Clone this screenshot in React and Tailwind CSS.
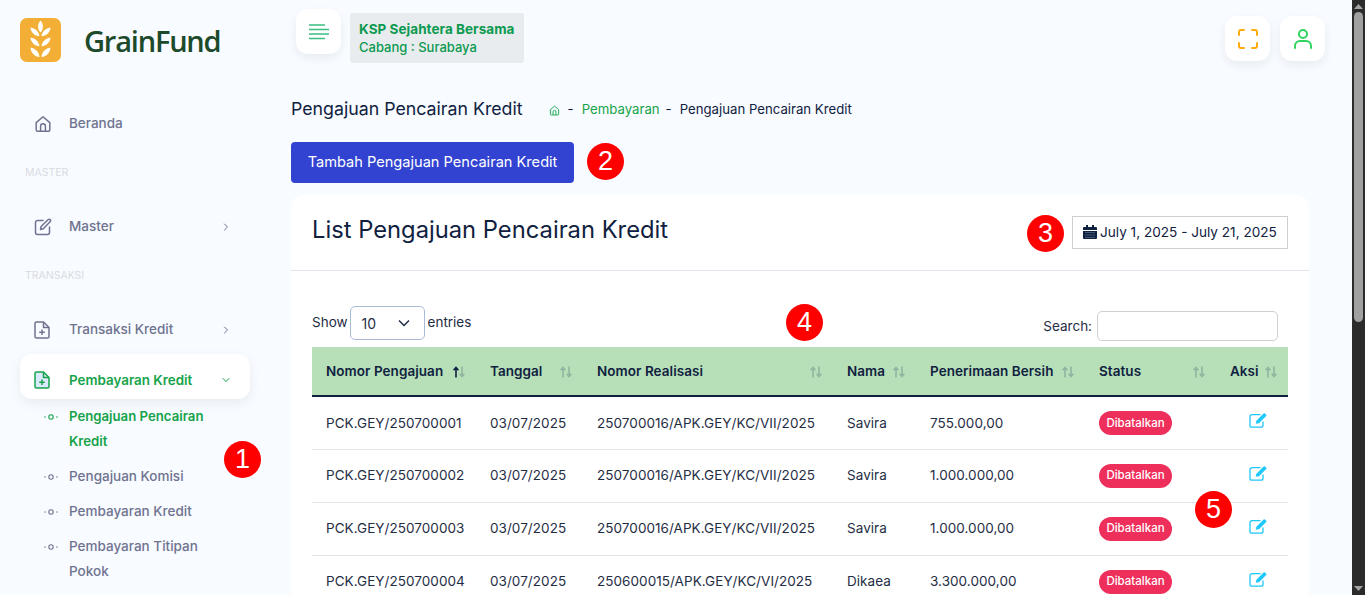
import React from "react";

function Sort({ active }) {
  return (
    <svg width="14" height="14" viewBox="0 0 14 14" className="mt-[2px] shrink-0">
      <g fill="none" strokeWidth="1.6" stroke={active ? "#10213f" : "#8fb5a0"}>
        <path d="M4 12.500V3M1.600 5.200 4 2.500l2.400 2.700" />
      </g>
      <g fill="none" strokeWidth="1.6" stroke="#8fb5a0">
        <path d="M10 1.500V11M7.600 8.800 10 11.500l2.400-2.700" />
      </g>
    </svg>
  );
}

function Edit() {
  return (
    <svg width="19" height="16" viewBox="0 0 19 16" fill="none">
      <path d="M11.500 2.600H3a2 2 0 0 0-2 2v8.600a2 2 0 0 0 2 2h9a2 2 0 0 0 2-2V9.500" stroke="#1ec8fa" strokeWidth="1.300" />
      <path d="M6.700 11.700l.7-3L14.600 1.500a1 1 0 0 1 1.400 0l1.200 1.200a1 1 0 0 1 0 1.400L10 11.200z" fill="#1ec8fa" />
    </svg>
  );
}

function Bullet({ active }) {
  const c = active ? "#16a34a" : "#6f7390";
  return (
    <svg width="14" height="6" viewBox="0 0 14 6" fill="none" className="shrink-0">
      <circle cx="7" cy="3" r="2.200" stroke={c} strokeWidth="1.100" />
      <path d="M0 3h2M12 3h2" stroke={c} strokeWidth="0.800" />
    </svg>
  );
}

function Home({ c = "#6f7390", s = 18 }) {
  return (
    <svg width={s} height={s} viewBox="0 0 18 18" fill="none" stroke={c} strokeWidth="1.500" strokeLinejoin="round">
      <path d="M2.200 7.600 9 1.800l6.800 5.800v7.200a1.500 1.500 0 0 1-1.500 1.500H3.700a1.500 1.500 0 0 1-1.500-1.500z" />
      <path d="M6.600 16.200v-5a2.400 2.400 0 0 1 4.800 0v5" />
    </svg>
  );
}

function FilePlus({ active }) {
  const c = active ? "#16a34a" : "#6f7390";
  return (
    <svg width="16" height="18" viewBox="0 0 16 18" fill="none" stroke={c} strokeWidth="1.500" strokeLinejoin="round">
      <path d="M2.500 1h7L15 6.500v9a1.500 1.500 0 0 1-1.500 1.500h-11A1.500 1.500 0 0 1 1 15.500v-13A1.500 1.500 0 0 1 2.500 1z" fill={active ? "#dbeafe" : "none"} />
      <path d="M9.500 1v5.500H15" />
      <path d="M8 8.500v5.500M5.200 11.200h5.600" />
    </svg>
  );
}

function EditNav() {
  return (
    <svg width="18" height="18" viewBox="0 0 18 18" fill="none" stroke="#6f7390" strokeWidth="1.500" strokeLinejoin="round" strokeLinecap="round">
      <path d="M9 2.500H3.500a2 2 0 0 0-2 2v10a2 2 0 0 0 2 2h10a2 2 0 0 0 2-2V9" />
      <path d="M6.500 11.500l.6-3L14 1.700a1.400 1.400 0 0 1 2.100 2L9.300 10.700z" />
    </svg>
  );
}

function Chev({ down, c = "#6f7390" }) {
  return (
    <svg width="8" height="8" viewBox="0 0 8 8" fill="none" stroke={c} strokeWidth="1" strokeLinecap="round" strokeLinejoin="round">
      {down ? <path d="M1 2.500l3 3 3-3" /> : <path d="M2.500 1l3 3-3 3" />}
    </svg>
  );
}

function NavItem({ icon, label, chev }) {
  return (
    <div className="flex h-[45px] items-center rounded-xl pl-[14px] pr-[20px]">
      <span className="flex w-[35px] shrink-0 items-center">{icon}</span>
      <span className="flex-1 text-[13.5px] font-medium text-[#6f7390]">{label}</span>
      {chev && <Chev />}
    </div>
  );
}

function SubItem({ active, children }) {
  return (
    <div className="mb-[10px] flex pl-[24px] pr-[20px]">
      <span className="flex h-[25px] w-[25px] shrink-0 items-center">
        <Bullet active={active} />
      </span>
      <span className={`leading-[25px] ${active ? "text-[13.2px] font-semibold text-[#16a34a]" : "text-[13.5px] font-medium text-[#6f7390]"}`}>{children}</span>
    </div>
  );
}

function Marker({ n, className }) {
  return (
    <span className={`absolute flex h-[37px] w-[37px] items-center justify-center rounded-full bg-[#fe0000] font-['Liberation_Sans',sans-serif] text-[27px] leading-none font-normal text-white ${className}`}>
      {n}
    </span>
  );
}

function Sidebar() {
  return (
    <aside className="relative w-[271px] shrink-0 bg-[#f8fbff]">
      <div className="flex h-[80px] items-center pl-[20px]">
        <svg width="41" height="44" viewBox="0 0 41 44" className="shrink-0">
          <rect width="41" height="44" rx="7" fill="#f2ae35" />
          <g fill="#fff">
            <path d="M20.500 2.500c3.200 3.600 3.200 8.500 0 12-3.200-3.500-3.200-8.400 0-12z" />
            <path d="M10.500 9.500c4.500.8 8.500 3.700 9 8.800-4.700-.2-8.900-4-9-8.800zM30.500 9.500c-4.500.8-8.500 3.700-9 8.800 4.700-.2 8.900-4 9-8.800z" />
            <path d="M10.500 19.500c4.500.8 8.500 3.700 9 8.800-4.700-.2-8.900-4-9-8.800zM30.500 19.500c-4.500.8-8.500 3.700-9 8.800 4.700-.2 8.900-4 9-8.800z" />
            <path d="M10.500 29.500c4.500.8 8.500 4 9 9.500-4.700-.2-8.900-4.500-9-9.500zM30.500 29.500c-4.500.8-8.500 4-9 9.500 4.700-.2 8.900-4.500 9-9.500z" />
          </g>
        </svg>
        <span className="ml-[23px] font-['Open_Sans',sans-serif] text-[29px] leading-none font-semibold tracking-[-1.2px] text-[#1c4a2b]">GrainFund</span>
      </div>
      <div className="pl-[20px] pr-[21px] pt-[21px]">
        <NavItem icon={<Home />} label="Beranda" />
        <div className="flex h-[58px] items-start pl-[5px] pt-[18px] text-[10.5px] leading-[17px] text-[#d9dce3]">MASTER</div>
        <NavItem icon={<EditNav />} label="Master" chev />
        <div className="flex h-[58px] items-start pl-[5px] pt-[18px] text-[10.5px] leading-[17px] text-[#d9dce3]">TRANSAKSI</div>
        <NavItem icon={<FilePlus />} label="Transaksi Kredit" chev />
        <div className="mt-[2px] flex h-[45px] items-center rounded-xl bg-white pl-[14px] pr-[20px] pt-[7px] shadow-[0_4px_12px_rgba(30,40,70,0.07)]">
          <span className="flex w-[35px] shrink-0 items-center"><FilePlus active /></span>
          <span className="flex-1 text-[13.4px] font-semibold text-[#16a34a]">Pembayaran Kredit</span>
          <Chev down c="#16a34a" />
        </div>
      </div>
      <div className="pl-[20px] pr-[21px] pt-[5px]">
        <SubItem active>Pengajuan Pencairan Kredit</SubItem>
        <SubItem>Pengajuan Komisi</SubItem>
        <SubItem>Pembayaran Kredit</SubItem>
        <SubItem>Pembayaran Titipan Pokok</SubItem>
      </div>
      <Marker n="1" className="left-[224px] top-[441px]" />
    </aside>
  );
}

function IconBtn({ children }) {
  return (
    <button className="flex h-[45px] w-[45px] items-center justify-center rounded-xl bg-white shadow-[0_4px_10px_rgba(30,40,70,0.07)]">
      {children}
    </button>
  );
}

function Header() {
  return (
    <div className="flex h-[80px] items-start pl-[5px] pt-[9px]">
      <IconBtn>
        <svg width="20" height="16" viewBox="0 0 20 16" stroke="#3bbf83" strokeWidth="1.500">
          <path d="M0 1h16M0 5.500h20M0 10h20M0 14.500h16" />
        </svg>
      </IconBtn>
      <div className="ml-[9px] mt-[4px] h-[50px] w-[174px] rounded-[3px] bg-[#e9ecef] pl-[9px] pt-[7px] text-[13px] leading-[18px] text-[#0b9a4f]">
        <div className="whitespace-nowrap text-[13.5px] font-bold tracking-[0.05px]">KSP Sejahtera Bersama</div>
        <div className="font-medium">Cabang : Surabaya</div>
      </div>
      <div className="ml-auto mr-[27px] flex gap-[10px] pt-[7px]">
        <IconBtn>
          <svg width="20" height="20" viewBox="0 0 20 20" fill="none" stroke="#fdab0d" strokeWidth="2" strokeLinecap="round" strokeLinejoin="round">
            <path d="M1 6V3a2 2 0 0 1 2-2h3M14 1h3a2 2 0 0 1 2 2v3M19 14v3a2 2 0 0 1-2 2h-3M6 19H3a2 2 0 0 1-2-2v-3" />
          </svg>
        </IconBtn>
        <IconBtn>
          <svg width="18" height="20" viewBox="0 0 18 20" fill="none" stroke="#2fd45f" strokeWidth="2" strokeLinecap="round">
            <circle cx="9" cy="5" r="4" />
            <path d="M1 19v-2a5 5 0 0 1 5-5h6a5 5 0 0 1 5 5v2" />
          </svg>
        </IconBtn>
      </div>
    </div>
  );
}

const rows = [
  ["PCK.GEY/250700001", "03/07/2025", "250700016/APK.GEY/KC/VII/2025", "Savira", "755.000,00"],
  ["PCK.GEY/250700002", "03/07/2025", "250700016/APK.GEY/KC/VII/2025", "Savira", "1.000.000,00"],
  ["PCK.GEY/250700003", "03/07/2025", "250700016/APK.GEY/KC/VII/2025", "Savira", "1.000.000,00"],
  ["PCK.GEY/250700004", "03/07/2025", "250600015/APK.GEY/KC/VI/2025", "Dikaea", "3.300.000,00"],
];

const headers = [
  ["Nomor Pengajuan", true],
  ["Tanggal"],
  ["Nomor Realisasi"],
  ["Nama"],
  ["Penerimaan Bersih"],
  ["Status"],
  ["Aksi"],
];

function DataTable() {
  return (
    <table className="w-[976px] table-fixed border-collapse text-[13.5px] tracking-[0.05px] text-[#1f2d45]">
      <colgroup>
        <col className="w-[164px]" />
        <col className="w-[107px]" />
        <col className="w-[250px]" />
        <col className="w-[83px]" />
        <col className="w-[169px]" />
        <col className="w-[131px]" />
        <col className="w-[72px]" />
      </colgroup>
      <thead>
        <tr className="h-[49px] border-b-2 border-[#10213f] bg-[#b7e0b9]">
          {headers.map(([h, active]) => (
            <th key={h} className="pl-[14px] pr-[10px] text-left font-semibold text-[#10213f]">
              <div className="flex items-center justify-between whitespace-nowrap">
                <span>{h}</span>
                <Sort active={active} />
              </div>
            </th>
          ))}
        </tr>
      </thead>
      <tbody>
        {rows.map((r) => (
          <tr key={r[0]} className="h-[53px] border-b border-[#e3e5ea]">
            {r.map((c) => (
              <td key={c} className="whitespace-nowrap pl-[14px]">{c}</td>
            ))}
            <td className="pl-[14px]">
              <span className="inline-flex h-[24px] w-[73px] items-center justify-center rounded-full bg-[#ef2f5b] pt-[1px] text-[11.5px] font-medium tracking-normal text-white">Dibatalkan</span>
            </td>
            <td className="pl-[33px]">
              <div className="-mt-[6px]"><Edit /></div>
            </td>
          </tr>
        ))}
      </tbody>
    </table>
  );
}

function Main() {
  return (
    <main className="relative min-w-0 flex-1 overflow-hidden pl-[20px]">
      <Header />
      <div className="flex h-[40px] items-center pb-[2px] pt-[20px]">
        <h1 className="text-[17.75px] leading-[24px] text-[#10213f]">Pengajuan Pencairan Kredit</h1>
        <div className="ml-[26px] mt-[2px] flex items-center gap-[8px] text-[13.2px]">
          <Home c="#16a34a" s={11} />
          <span className="text-[#10213f]">-</span>
          <span className="-mr-[2px] text-[#16a34a]">Pembayaran</span>
          <span className="text-[#10213f]">-</span>
          <span className="text-[#10213f]">Pengajuan Pencairan Kredit</span>
        </div>
      </div>
      <button className="relative mt-[22px] flex h-[41px] w-[283px] items-center justify-center rounded-[4px] bg-[#3243d1] pt-[1px] text-[14.6px] text-white">
        Tambah Pengajuan Pencairan Kredit
        <Marker n="2" className="left-[296px] top-[1px]" />
      </button>
      <section className="mr-[43px] mt-[12px] w-[1018px] rounded-t-xl bg-white">
        <div className="flex h-[76px] items-center justify-between border-b border-[#e1e4ec] pl-[21px] pr-[21px]">
          <h2 className="-mt-[6px] text-[23.75px] font-normal text-[#10213f]">List Pengajuan Pencairan Kredit</h2>
          <div className="relative -mt-[1px] flex h-[33px] w-[216px] items-center justify-start gap-[3px] border border-[#cfcfcf] pl-[10px] text-[13.6px] text-[#10213f]">
            <svg width="14" height="14" viewBox="0 0 14 14" fill="#10213f" className="-mt-[1px] shrink-0">
              <path d="M3 0h2v2h4V0h2v2h2a1 1 0 0 1 1 1v2H0V3a1 1 0 0 1 1-1h2zM0 6h14v7a1 1 0 0 1-1 1H1a1 1 0 0 1-1-1z" />
              <path d="M2 7.500h10M2 10h10M2 12.500h10" stroke="#6a7da0" strokeWidth="0.600" />
            </svg>
            <span className="whitespace-nowrap">July 1, 2025 - July 21, 2025</span>
            <Marker n="3" className="-left-[46px] -top-[2px]" />
          </div>
        </div>
        <div className="px-[21px] pt-[35px]">
          <div className="relative flex h-[41px] items-start text-[13.5px] text-[#1f2d45]">
            <div className="flex items-center gap-[3px]">
              <span className="-mr-[1px] pb-[2px]">Show</span>
              <div className="flex h-[34px] w-[75px] items-center justify-between rounded-[5px] border border-[#a8bbd6] pl-[11px] pr-[14px] text-[14px]">
                10
                <svg width="12" height="8" viewBox="0 0 12 8" fill="none" stroke="#1f2d45" strokeWidth="1.500"><path d="M1 1.500l5 5 5-5" /></svg>
              </div>
              <span className="pb-[2px]">entries</span>
            </div>
            <div className="ml-auto mr-[10px] mt-[5px] flex items-center gap-[5px]">
              <span className="pt-[1px]">Search:</span>
              <input aria-label="Search" className="h-[30px] w-[181px] rounded-[5px] border border-[#cfcfcf]" />
            </div>
            <Marker n="4" className="left-[474px] -top-[2px]" />
          </div>
          <div className="relative">
            <DataTable />
            <Marker n="5" className="left-[883px] top-[144px]" />
          </div>
        </div>
      </section>
    </main>
  );
}

function Scrollbar() {
  return (
    <div className="flex w-[13px] shrink-0 flex-col items-center bg-[#2b2b2b]">
      <svg width="9" height="5" viewBox="0 0 9 5" className="mt-[4px] shrink-0"><path d="M4.500 0 9 5H0z" fill="#a3a3a3" /></svg>
      <div className="mt-[3px] h-[310px] w-[9px] rounded-full bg-[#a0a0a0]" />
      <svg width="9" height="5" viewBox="0 0 9 5" className="mb-[4px] mt-auto shrink-0"><path d="M4.500 5 9 0H0z" fill="#a3a3a3" /></svg>
    </div>
  );
}

export default function App() {
  return (
    <div className="flex h-[595px] overflow-hidden bg-[#f8fbff] font-['Inter',sans-serif]">
      <Sidebar />
      <Main />
      <Scrollbar />
    </div>
  );
}
